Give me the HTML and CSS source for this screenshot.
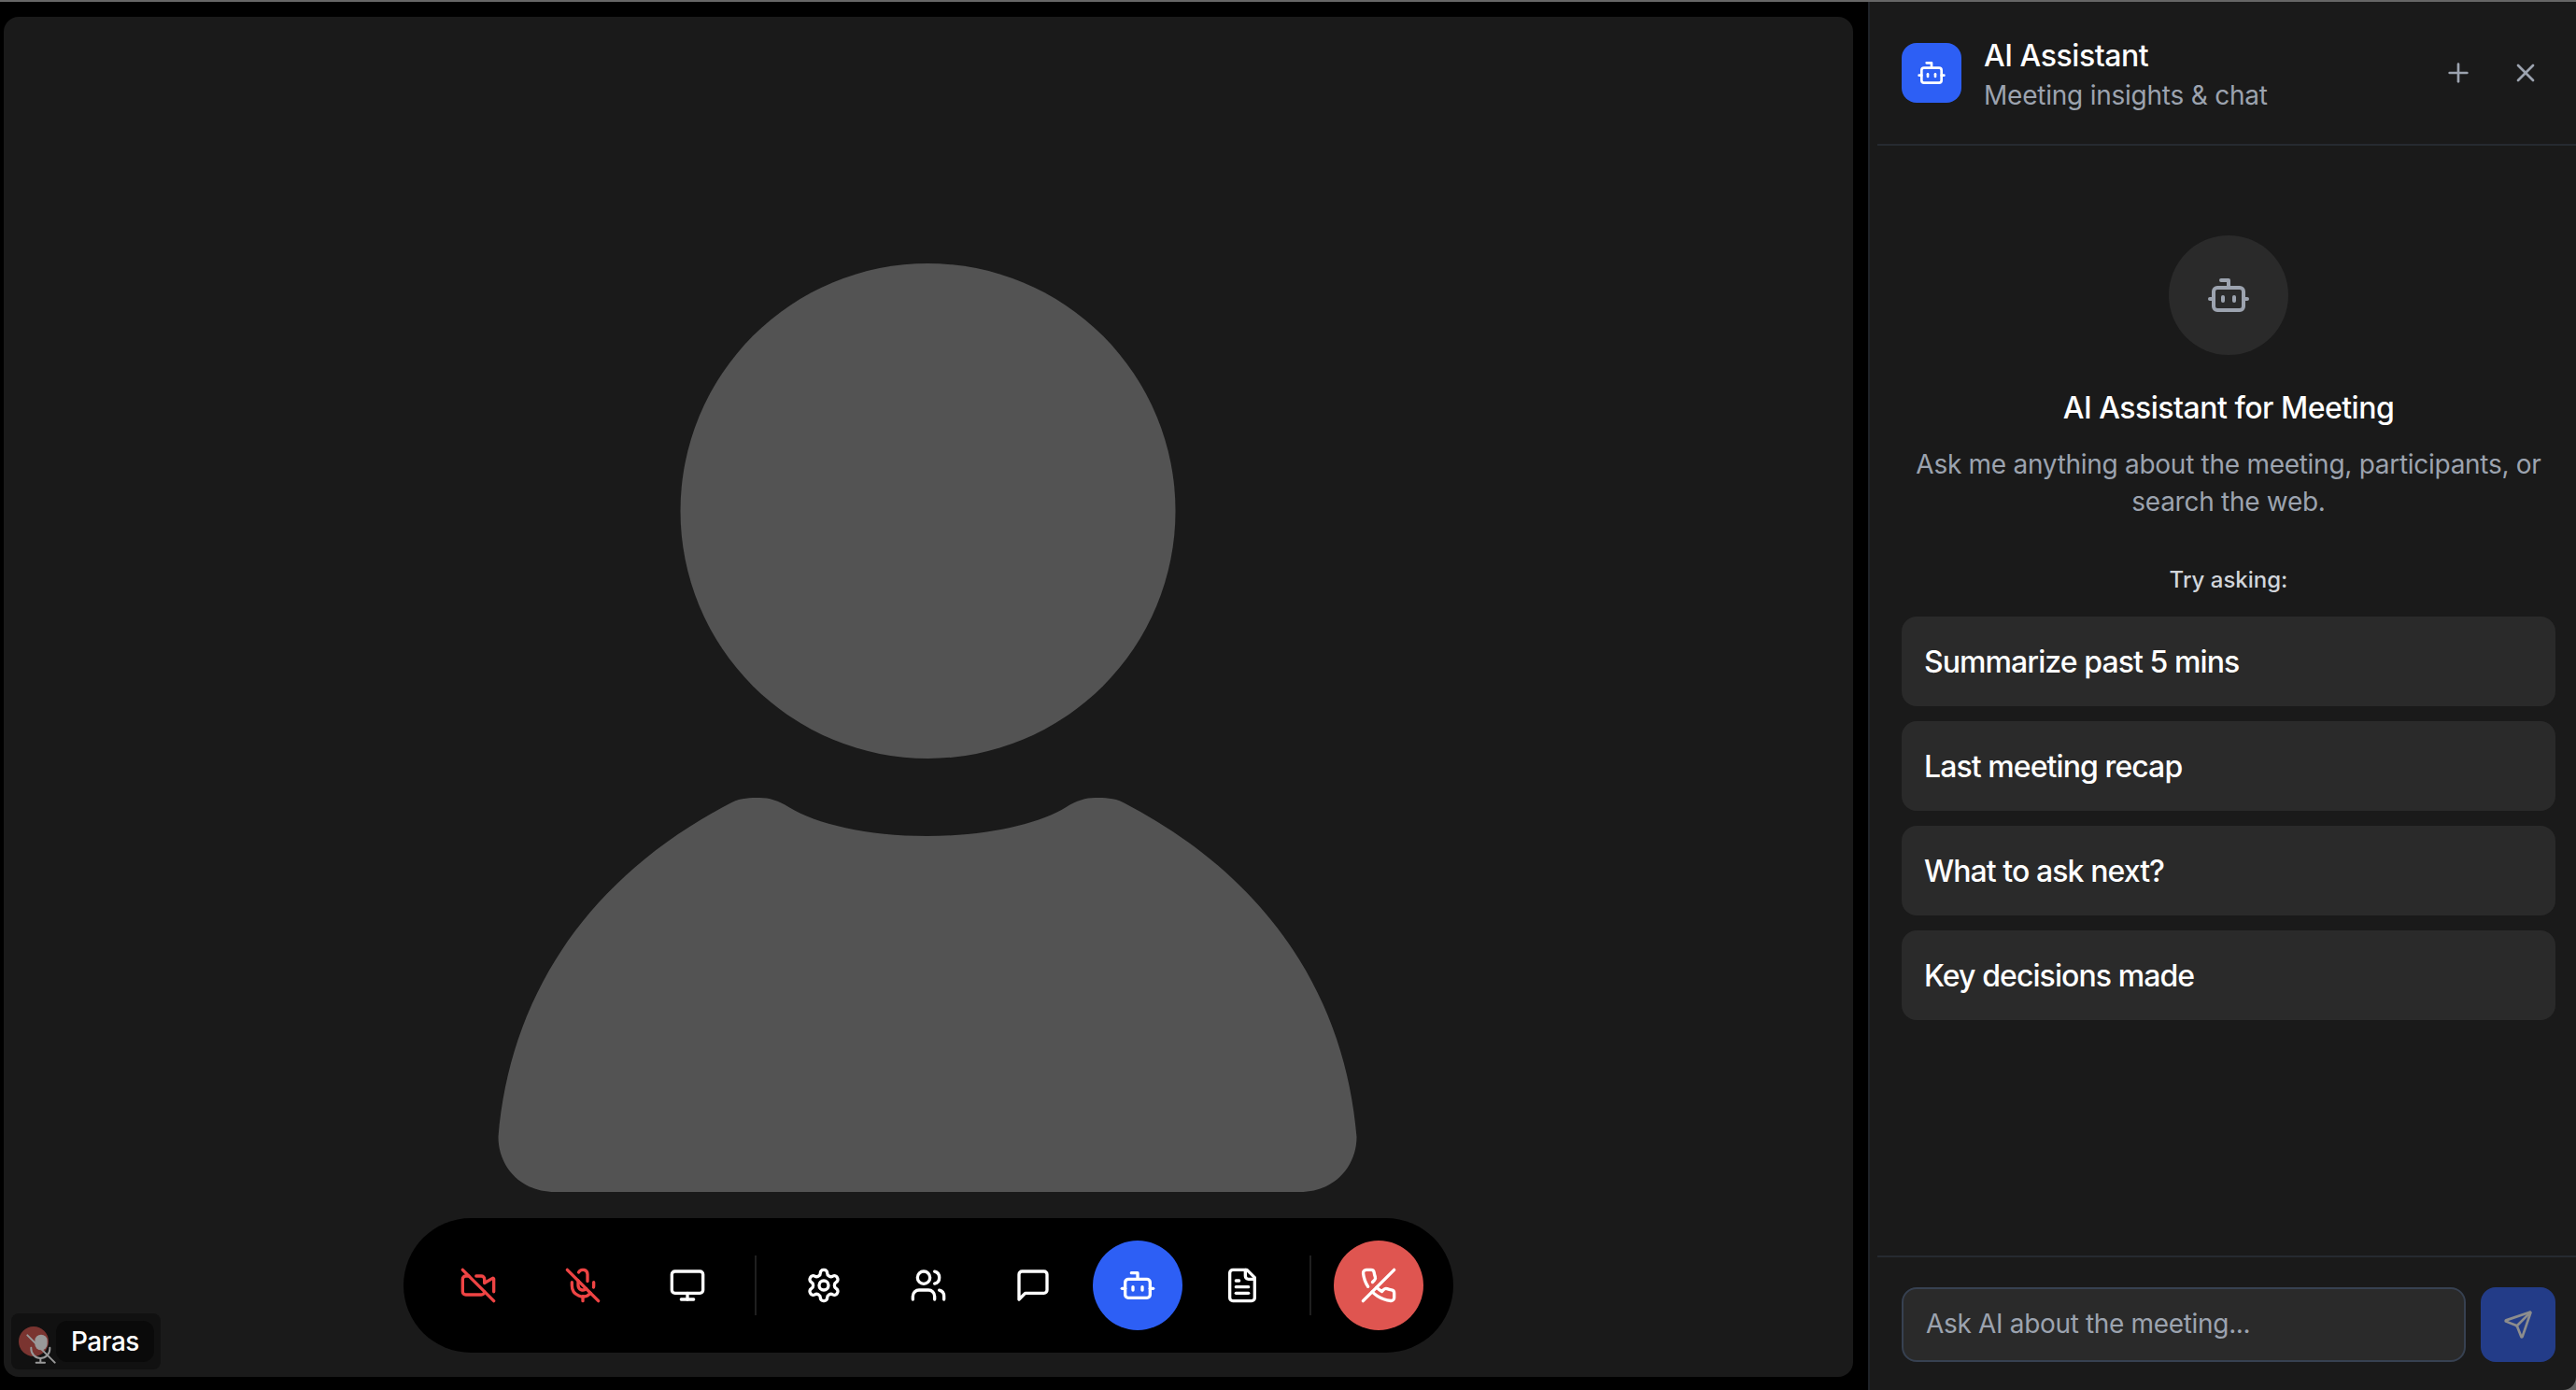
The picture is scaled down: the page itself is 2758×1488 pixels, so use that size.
FILE: index.html
```html
<!DOCTYPE html>
<html lang="en">
<head>
    <meta charset="UTF-8">
    <title>Meeting</title>
    <link rel="stylesheet" href="styles.css">
</head>
<body>
    <div class="app">
        <main class="stage">
            <div class="tile">
                <svg class="avatar" viewBox="0 0 919 994" fill="#535353">
                    <circle cx="460" cy="265" r="265"/>
                    <path d="M61 994C22 994 0 965 0 935C12 790 90 660 250 577C260 572 270 572 280 572C290 572 300 575 311 582C340 600 395 613 459 613C524 613 579 600 608 582C619 575 629 572 639 572C649 572 659 572 669 577C829 660 907 790 919 935C919 965 897 994 858 994Z"/>
                </svg>

                <div class="name-tag">
                    <span class="muted-dot"></span>
                    <svg class="muted-mic" viewBox="0 0 24 24" fill="none" stroke="#999" stroke-width="1.5" stroke-linecap="round">
                        <rect x="7" y="0.5" width="10" height="12.5" rx="5" fill="#999" stroke="none"/>
                        <path d="M4 11v1a7.5 7.5 0 0 0 15 0v-1"/>
                        <path d="M11.5 19.5v3"/>
                        <path d="M8 23h7"/>
                        <path d="M1 1l22 22"/>
                    </svg>
                    <span class="name-pill">Paras</span>
                </div>

                <div class="toolbar">
                    <button class="tool tool-off">
                        <svg class="icon" viewBox="0 0 24 24"><path d="M10.66 6H14a2 2 0 0 1 2 2v2.5l5.248-3.062A.5.5 0 0 1 22 7.87v8.196"/><path d="M16 16a2 2 0 0 1-2 2H4a2 2 0 0 1-2-2V8a2 2 0 0 1 2-2h2"/><path d="m2 2 20 20"/></svg>
                    </button>
                    <button class="tool tool-off">
                        <svg class="icon" viewBox="0 0 24 24"><path d="m2 2 20 20"/><path d="M18.89 13.23A7.12 7.12 0 0 0 19 12v-2"/><path d="M5 10v2a7 7 0 0 0 12 5"/><path d="M15 9.34V5a3 3 0 0 0-5.68-1.33"/><path d="M9 9v3a3 3 0 0 0 5.12 2.12"/><path d="M12 19v3"/></svg>
                    </button>
                    <button class="tool">
                        <svg class="icon" viewBox="0 0 24 24"><rect x="2" y="3" width="20" height="14" rx="2"/><path d="M8 21h8"/><path d="M12 17v4"/></svg>
                    </button>
                    <span class="divider"></span>
                    <button class="tool">
                        <svg class="icon" viewBox="0 0 24 24"><path d="M12.22 2h-.44a2 2 0 0 0-2 2v.18a2 2 0 0 1-1 1.73l-.43.25a2 2 0 0 1-2 0l-.15-.08a2 2 0 0 0-2.73.73l-.22.38a2 2 0 0 0 .73 2.73l.15.1a2 2 0 0 1 1 1.72v.51a2 2 0 0 1-1 1.74l-.15.09a2 2 0 0 0-.73 2.73l.22.38a2 2 0 0 0 2.73.73l.15-.08a2 2 0 0 1 2 0l.43.25a2 2 0 0 1 1 1.73V20a2 2 0 0 0 2 2h.44a2 2 0 0 0 2-2v-.18a2 2 0 0 1 1-1.73l.43-.25a2 2 0 0 1 2 0l.15.08a2 2 0 0 0 2.73-.73l.22-.39a2 2 0 0 0-.73-2.73l-.15-.08a2 2 0 0 1-1-1.74v-.5a2 2 0 0 1 1-1.74l.15-.09a2 2 0 0 0 .73-2.73l-.22-.38a2 2 0 0 0-2.73-.73l-.15.08a2 2 0 0 1-2 0l-.43-.25a2 2 0 0 1-1-1.73V4a2 2 0 0 0-2-2z"/><circle cx="12" cy="12" r="3"/></svg>
                    </button>
                    <button class="tool">
                        <svg class="icon" viewBox="0 0 24 24"><path d="M16 21v-2a4 4 0 0 0-4-4H6a4 4 0 0 0-4 4v2"/><circle cx="9" cy="7" r="4"/><path d="M22 21v-2a4 4 0 0 0-3-3.87"/><path d="M16 3.13a4 4 0 0 1 0 7.75"/></svg>
                    </button>
                    <button class="tool">
                        <svg class="icon" viewBox="0 0 24 24"><path d="M21 15a2 2 0 0 1-2 2H7l-4 4V5a2 2 0 0 1 2-2h14a2 2 0 0 1 2 2z"/></svg>
                    </button>
                    <button class="tool tool-active">
                        <svg class="icon" viewBox="0 0 24 24"><path d="M12 8V4H8"/><rect x="4" y="8" width="16" height="12" rx="2"/><path d="M2 14h2"/><path d="M20 14h2"/><path d="M15 13v2"/><path d="M9 13v2"/></svg>
                    </button>
                    <button class="tool">
                        <svg class="icon" viewBox="0 0 24 24"><path d="M15 2H6a2 2 0 0 0-2 2v16a2 2 0 0 0 2 2h12a2 2 0 0 0 2-2V7Z"/><path d="M14 2v4a2 2 0 0 0 2 2h4"/><path d="M10 9H8"/><path d="M16 13H8"/><path d="M16 17H8"/></svg>
                    </button>
                    <span class="divider"></span>
                    <button class="tool tool-end">
                        <svg class="icon" viewBox="0 0 24 24"><path d="M10.68 13.31a16 16 0 0 0 3.41 2.6l1.27-1.27a2 2 0 0 1 2.11-.45 12.84 12.84 0 0 0 2.81.7 2 2 0 0 1 1.72 2v3a2 2 0 0 1-2.18 2 19.79 19.79 0 0 1-8.63-3.07 19.42 19.42 0 0 1-3.33-2.67m-2.67-3.34a19.79 19.79 0 0 1-3.07-8.63A2 2 0 0 1 4.11 2h3a2 2 0 0 1 2 1.72 12.84 12.84 0 0 0 .7 2.81 2 2 0 0 1-.45 2.11L8.09 9.91"/><path d="M22 2 2 22"/></svg>
                    </button>
                </div>
            </div>
        </main>

        <aside class="sidebar">
            <header class="side-header">
                <div class="bot-tile">
                    <svg class="icon icon-32" viewBox="0 0 24 24"><path d="M12 8V4H8"/><rect x="4" y="8" width="16" height="12" rx="2"/><path d="M2 14h2"/><path d="M20 14h2"/><path d="M15 13v2"/><path d="M9 13v2"/></svg>
                </div>
                <div class="side-titles">
                    <div class="side-title">AI Assistant</div>
                    <div class="side-sub">Meeting insights &amp; chat</div>
                </div>
                <div class="side-actions">
                    <button class="side-btn">
                        <svg class="icon icon-32" viewBox="0 0 24 24"><path d="M5 12h14"/><path d="M12 5v14"/></svg>
                    </button>
                    <button class="side-btn">
                        <svg class="icon icon-32" viewBox="0 0 24 24"><path d="M18 6 6 18"/><path d="m6 6 12 12"/></svg>
                    </button>
                </div>
            </header>

            <section class="side-body">
                <div class="bot-circle">
                    <svg class="icon icon-48" viewBox="0 0 24 24"><path d="M12 8V4H8"/><rect x="4" y="8" width="16" height="12" rx="2"/><path d="M2 14h2"/><path d="M20 14h2"/><path d="M15 13v2"/><path d="M9 13v2"/></svg>
                </div>
                <h2 class="intro-title">AI Assistant for Meeting</h2>
                <p class="intro-text">Ask me anything about the meeting, participants, or search the web.</p>
                <p class="try-label">Try asking:</p>
                <div class="suggestions">
                    <button class="suggestion">Summarize past 5 mins</button>
                    <button class="suggestion">Last meeting recap</button>
                    <button class="suggestion">What to ask next?</button>
                    <button class="suggestion">Key decisions made</button>
                </div>
            </section>

            <footer class="side-footer">
                <input class="ask-input" type="text" placeholder="Ask AI about the meeting...">
                <button class="send-btn">
                    <svg class="icon icon-32" viewBox="0 0 24 24"><path d="M14.536 21.686a.5.5 0 0 0 .937-.024l6.5-19a.496.496 0 0 0-.635-.635l-19 6.5a.5.5 0 0 0-.024.937l7.93 3.18a2 2 0 0 1 1.112 1.11z"/><path d="m21.854 2.147-10.94 10.939"/></svg>
                </button>
            </footer>
        </aside>
    </div>
</body>
</html>
```

FILE: styles.css
```css
* {
    box-sizing: border-box;
}
body {
    margin: 0;
    background-color: #666;
    font-family: 'Inter', 'Liberation Sans', sans-serif;
    color: #fff;
    overflow: hidden;
}
button {
    font-family: inherit;
    border: none;
    cursor: pointer;
}
.app {
    display: flex;
    height: 1488px;
    padding-top: 2px;
}
.icon {
    display: block;
    width: 40px;
    height: 40px;
    fill: none;
    stroke: currentColor;
    stroke-width: 2;
    stroke-linecap: round;
    stroke-linejoin: round;
}
.icon-32 {
    width: 32px;
    height: 32px;
}
.icon-48 {
    width: 48px;
    height: 48px;
}

/* video area */
.stage {
    width: 2000px;
    padding: 16px 16px 14px 4px;
    background-color: #000;
}
.tile {
    position: relative;
    height: 100%;
    display: flex;
    justify-content: center;
    padding: 264px 2px 0 0;
    background-color: #1a1a1a;
    border-radius: 16px;
}
.avatar {
    width: 920px;
    height: 994px;
}
.toolbar {
    position: absolute;
    left: 428px;
    bottom: 26px;
    display: flex;
    align-items: center;
    gap: 16px;
    height: 144px;
    padding: 0 32px;
    background-color: #000;
    border-radius: 72px;
}
.tool {
    display: flex;
    align-items: center;
    justify-content: center;
    width: 96px;
    height: 96px;
    padding: 0;
    color: #fff;
    background: none;
    border-radius: 50%;
}
.tool-off {
    color: #ef4444;
}
.tool-active {
    background-color: #2d5ff5;
}
.tool-end {
    background-color: #df5550;
}
.divider {
    width: 2px;
    height: 64px;
    margin: 0 8px;
    background-color: #1f1f1f;
}
.name-tag {
    position: absolute;
    left: 8px;
    bottom: 8px;
    display: flex;
    align-items: center;
    width: 160px;
    height: 60px;
    padding-left: 8px;
    background-color: #111;
    border-radius: 8px;
}
.muted-dot {
    width: 32px;
    height: 32px;
    background-color: #7a3430;
    border-radius: 50%;
}
.muted-mic {
    position: absolute;
    left: 16px;
    top: 22px;
    width: 32px;
    height: 32px;
}
.name-pill {
    height: 44px;
    margin-left: 8px;
    padding: 0 16px;
    font-size: 28px;
    font-weight: 500;
    line-height: 44px;
    letter-spacing: -0.5px;
    background-color: #0a0a0a;
    border-radius: 12px;
}

/* assistant panel */
.sidebar {
    flex: 1;
    display: flex;
    flex-direction: column;
    padding-left: 8px;
    background-color: #1a1a1a;
    border-left: 2px solid #1f2329;
    border-bottom-right-radius: 14px;
}
.side-header {
    display: flex;
    align-items: center;
    height: 154px;
    padding: 0 26px;
    border-bottom: 2px solid #262a30;
}
.bot-tile {
    display: flex;
    align-items: center;
    justify-content: center;
    width: 64px;
    height: 64px;
    margin-right: 24px;
    background-color: #2d5ff5;
    border-radius: 16px;
}
.side-titles {
    flex: 1;
    padding-top: 4px;
}
.side-title {
    font-size: 32px;
    font-weight: 500;
    line-height: 44px;
    letter-spacing: -0.45px;
}
.side-sub {
    font-size: 28px;
    line-height: 40px;
    letter-spacing: -0.23px;
    color: #9ca3af;
}
.side-actions {
    display: flex;
    gap: 16px;
}
.side-btn {
    display: flex;
    align-items: center;
    justify-content: center;
    width: 56px;
    height: 56px;
    padding: 0;
    color: #9ca3af;
    background: none;
}
.side-body {
    flex: 1;
    display: flex;
    flex-direction: column;
    align-items: center;
    padding: 96px 22px 0 26px;
}
.bot-circle {
    display: flex;
    align-items: center;
    justify-content: center;
    width: 128px;
    height: 128px;
    color: #9ca3af;
    background-color: #2a2a2a;
    border-radius: 50%;
}
.intro-title {
    margin: 35px 0 0;
    font-size: 32px;
    font-weight: 500;
    line-height: 44px;
    letter-spacing: -0.5px;
}
.intro-text {
    margin: 18px 0 0;
    font-size: 28px;
    line-height: 40px;
    letter-spacing: -0.28px;
    color: #9ca3af;
    text-align: center;
}
.try-label {
    margin: 47px 0 0;
    font-size: 24px;
    font-weight: 500;
    line-height: 33px;
    color: #d1d5db;
}
.suggestions {
    display: flex;
    flex-direction: column;
    gap: 16px;
    width: 100%;
    margin-top: 23px;
}
.suggestion {
    height: 96px;
    padding: 0 24px;
    font-size: 32px;
    font-weight: 450;
    letter-spacing: -0.92px;
    color: #fff;
    text-align: left;
    background-color: #2a2a2a;
    border-radius: 16px;
}
.side-footer {
    display: flex;
    gap: 16px;
    height: 144px;
    padding: 32px 22px 30px 26px;
    border-top: 2px solid #262a30;
}
.ask-input {
    flex: 1;
    min-width: 0;
    padding: 0 24px 2px;
    font-family: inherit;
    font-size: 28px;
    letter-spacing: -0.33px;
    color: #fff;
    background-color: #2a2a2a;
    border: 2px solid #374151;
    border-radius: 16px;
    outline: none;
}
.ask-input::placeholder {
    color: #9ca3af;
    opacity: 1;
}
.send-btn {
    display: flex;
    align-items: center;
    justify-content: center;
    width: 80px;
    height: 80px;
    padding: 0;
    color: #fff;
    background-color: #2d5ff5;
    border-radius: 16px;
    opacity: 0.5;
}
```
